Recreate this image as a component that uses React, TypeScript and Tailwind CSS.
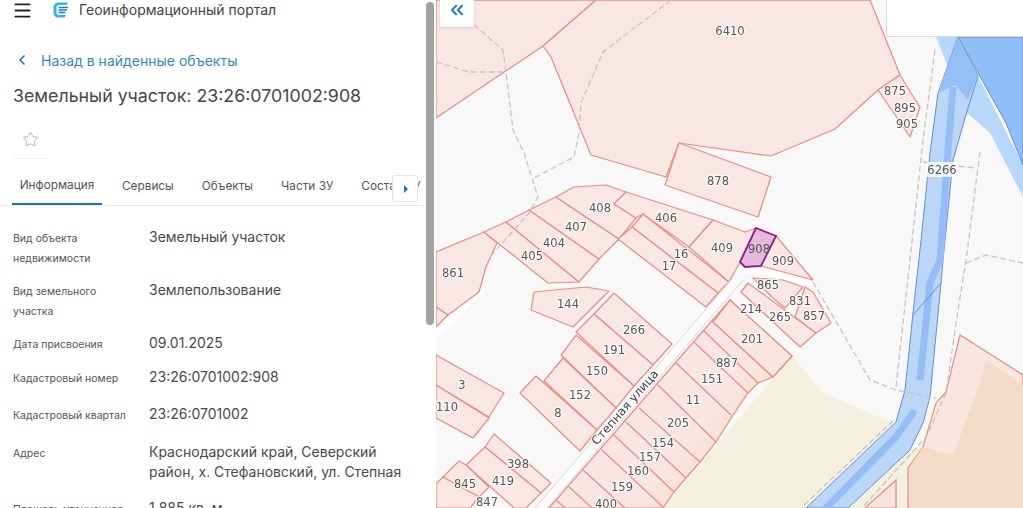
import { ChevronLeft, ChevronsLeft, Star, Menu } from "lucide-react";

const parcels: string[] = [
  "436,118 543,46 596,0 436,0",
  "596,0 543,46 551,57 591,155 666,177 679,143 771,156 835,129 878,90 900,75 886,40 870,0",
  "679,143 771,177 758,217 665,185",
  "436,252 484,232 497,243 486,267 479,292 448,315 436,307",
  "436,307 448,315 436,327",
  "484,232 506,222 579,282 548,283",
  "506,222 529,210 599,259 579,282",
  "529,210 556,197 619,239 599,259",
  "556,197 574,187 606,185 626,192 614,204 636,218 619,239",
  "626,192 713,220 689,247 643,214 636,218 614,204",
  "643,214 729,282 718,293 632,227",
  "632,227 718,293 706,307 618,239",
  "713,220 745,232 756,228 740,262 729,282 689,247",
  "776,236 813,280 761,266",
  "534,292 586,287 609,291 573,327 531,310",
  "614,293 672,344 653,365 594,314",
  "594,314 653,365 634,386 576,332",
  "576,335 634,386 616,408 561,355",
  "563,358 616,408 597,430 544,381",
  "536,376 597,430 580,451 520,393",
  "436,355 504,393 489,417 436,385",
  "436,385 489,418 473,438 436,418",
  "494,434 551,483 541,493 485,447",
  "485,447 541,493 526,508 514,508 466,465",
  "459,461 466,465 489,487 479,497 443,477",
  "443,477 479,497 470,508 436,508 436,484",
  "878,90 900,75 911,93 920,107 910,137",
  "741,292 748,283 816,333 800,347",
  "753,278 783,280 803,287 785,308 773,298",
  "805,287 813,292 831,323 816,333 795,317",
];

const frontLines: number[][] = [
  [713, 322, 773, 377],
  [703, 330, 758, 383],
  [694, 342, 748, 393],
  [676, 363, 731, 415],
  [658, 385, 716, 442],
  [639, 408, 700, 462],
  [626, 422, 686, 478],
  [614, 435, 674, 492],
  [602, 450, 663, 507],
  [583, 470, 625, 508],
  [569, 487, 592, 508],
  [556, 500, 565, 508],
];

const labels: [string, number, number][] = [
  ["6410", 730, 31], ["875", 895, 91], ["895", 905, 108], ["905", 907, 124],
  ["878", 718, 181], ["408", 600, 208], ["406", 666, 218], ["407", 576, 227], ["404", 554, 243],
  ["405", 532, 256], ["16", 681, 254], ["17", 669, 266], ["409", 722, 248], ["909", 783, 261],
  ["861", 453, 273], ["144", 568, 304], ["266", 634, 330], ["191", 614, 350], ["150", 597, 371],
  ["152", 580, 395], ["8", 558, 413], ["3", 462, 385], ["110", 447, 407], ["398", 518, 464],
  ["419", 503, 481], ["845", 465, 484], ["847", 487, 502], ["887", 727, 363], ["151", 712, 379],
  ["11", 693, 400], ["205", 678, 423], ["154", 663, 443], ["157", 650, 457], ["160", 638, 471],
  ["159", 622, 487], ["400", 606, 504], ["201", 752, 339], ["214", 751, 309], ["265", 780, 317],
  ["865", 768, 285], ["831", 800, 301], ["857", 814, 316],
];

const dashed: string[] = [
  "474,25 503,50 506,73 513,130 524,153 538,197 529,213 489,258",
  "436,62 469,72 503,72",
  "671,0 603,52 581,103 579,133 574,157 534,178",
  "935,50 923,140 910,260 896,387",
  "923,162 975,168",
  "980,152 966,260 956,323 946,393 926,437 863,507",
  "966,263 986,255 1023,263",
  "813,282 870,380 896,390 936,398",
  "804,505 894,420",
];

const LINE = "#e58f83";

function MapLayer() {
  return (
    <svg viewBox="436 0 587 508" className="block h-full w-full blur-[0.5px]">
      <defs>
        <linearGradient id="block" gradientUnits="userSpaceOnUse" x1="630" y1="400" x2="730" y2="480">
          <stop offset="0" stopColor="#f9e6e2" />
          <stop offset="0.55" stopColor="#f9e6e2" />
          <stop offset="1" stopColor="#f5dcb9" />
        </linearGradient>
      </defs>
      <rect x="436" y="0" width="587" height="508" fill="#f9f8f9" />
      <polygon points="792,356 823,393 893,423 806,508 663,508" fill="#f3f1de" />
      <polygon points="848,508 910,450 923,447 908,468 908,508" fill="#f3f1de" />
      <polyline points="436,335 482,290" fill="none" stroke="#ffffff" strokeWidth="6" />
      <polyline points="740,270 775,274 813,285" fill="none" stroke="#ffffff" strokeWidth="6" />
      {/* block along the street */}
      <polygon
        points="730,300 792,356 773,377 758,383 748,393 733,415 716,442 700,462 686,478 674,492 663,508 549,508"
        fill="url(#block)"
        stroke={LINE}
        strokeWidth="1.25"
      />
      {frontLines.map(([a, b, c, d]) => (
        <line key={`${a}-${b}`} x1={a} y1={b} x2={c} y2={d} stroke={LINE} strokeWidth="1.25" />
      ))}
      <polygon points="730,300 792,356 773,377 713,322" fill="#f9e6df" stroke={LINE} strokeWidth="1.25" />
      {parcels.map((p) => (
        <polygon key={p} points={p} fill="#f9e7e3" stroke={LINE} strokeWidth="1.25" strokeLinejoin="round" />
      ))}
      {/* street */}
      <polygon points="731,280 743,280 547,508 535,508" fill="#fcfcfc" />
      <line x1="743" y1="280" x2="547" y2="508" stroke="#d8d8d8" strokeWidth="1" />
      <line x1="731" y1="280" x2="535" y2="508" stroke="#d8d8d8" strokeWidth="1" />
      {/* right parcel */}
      <polygon points="960,335 1023,375 1023,508 908,508 908,468 923,447 936,403 946,392" fill="#f9e7df" stroke={LINE} strokeWidth="1.25" />
      <polygon points="986,360 1023,385 1023,508 909,508 909,468 923,447 953,455 980,383" fill="#f2dcc8" />
      <polygon points="896,480 865,508 896,508" fill="#f8e4dc" stroke={LINE} strokeWidth="1.25" />
      {/* water */}
      <polygon points="936,37 958,37 1023,165 1023,197 990,133 966,112" fill="#b7d8fb" />
      <polygon points="958,37 1023,37 1023,165 1006,123" fill="#90bff7" stroke="#5f8fd0" strokeWidth="1" />
      <polygon
        points="958,37 978,76 968,108 953,160 943,260 941,283 930,397 923,423 910,450 848,508 806,508 896,422 905,390 913,313 920,250 930,153 938,93"
        fill="#bcd6f8"
        stroke="#5f8fd0"
        strokeWidth="1"
      />
      <polygon points="958,37 978,76 968,100 955,85 938,93" fill="#93bff5" />
      <polyline points="953,87 948,150 940,260 930,283 920,380" fill="none" stroke="#94bdf5" strokeWidth="7" />
      <polyline points="913,413 896,437 826,508" fill="none" stroke="#94bdf5" strokeWidth="7" strokeLinecap="round" />
      <line x1="913" y1="315" x2="941" y2="283" stroke="#5f8fd0" strokeWidth="1" />
      {dashed.map((p) => (
        <polyline key={p} points={p} fill="none" stroke="#c5c3c3" strokeWidth="1.3" strokeDasharray="6 3" />
      ))}
      {/* selected parcel */}
      <polygon points="756,228 776,236 761,266 745,267 740,262" fill="#e4b9dc" stroke="#8e1a87" strokeWidth="1.8" />
      <g fontFamily="'DejaVu Sans', sans-serif" fontSize="11.5" fill="#555" textAnchor="middle">
        <text x="759" y="253">908</text>
        <rect x="927" y="162" width="30" height="15" fill="#ffffffd0" />
        <text x="942" y="174">6266</text>
        {labels.map(([t, x, y]) => (
          <text key={t} x={x} y={y + 4} stroke="#ffffffcc" strokeWidth="2.5" paintOrder="stroke">
            {t}
          </text>
        ))}
        <text
          transform="translate(628 410) rotate(-49)"
          fontSize="12"
          fill="#444"
          stroke="#ffffff"
          strokeWidth="2"
          paintOrder="stroke"
        >
          Степная улица
        </text>
      </g>
    </svg>
  );
}

function Logo() {
  return (
    <svg width="16" height="16" viewBox="0 0 16 16" className="shrink-0">
      <path d="M6 .5h9l-1.500 2.500H6C4.500 3 3.500 4.200 3.500 6v4.500C3.500 12 4.500 13 6 13h7l-1.500 2.500H5C2.500 15.500.5 13.500.5 11V5C.5 2.500 3 .5 6 .5z" fill="#38b3df" />
      <path d="M5.500 5.500h9.500M5.500 8h8.500M5.500 10.500h7" stroke="#1d7cc4" strokeWidth="1.500" />
    </svg>
  );
}

const rows: [string, string][] = [
  ["Вид объекта недвижимости", "Земельный участок"],
  ["Вид земельного участка", "Землепользование"],
  ["Дата присвоения", "09.01.2025"],
  ["Кадастровый номер", "23:26:0701002:908"],
  ["Кадастровый квартал", "23:26:0701002"],
  ["Адрес", "Краснодарский край, Северский район, х. Стефановский, ул. Степная"],
  ["Площадь уточненная", "1 885 кв. м"],
];

const rowPad = ["pb-[12px]", "pb-[12px]", "pb-[12px]", "pb-[16px]", "pb-[16px]", "pb-[16px]", "pb-0"];

function Panel() {
  return (
    <div className="flex h-[508px] w-[436px] shrink-0 bg-white font-['Inter',sans-serif]">
      <div className="min-w-0 flex-1 overflow-hidden">
        <header className="flex h-[20px] items-center pl-[12px] text-[#444]">
          <Menu size={21} strokeWidth={2.200} className="shrink-0 text-[#222]" />
          <span className="ml-[20px] flex"><Logo /></span>
          <span className="ml-[10px] text-[14px] leading-5 whitespace-nowrap">Геоинформационный портал</span>
        </header>
        <a className="mt-[30px] flex h-[20px] items-center pl-[14px] text-[14px] text-[#3c86b6]">
          <ChevronLeft size={16} strokeWidth={2.500} className="text-[#1f78b4]" />
          <span className="ml-[11px] whitespace-nowrap">Назад в найденные объекты</span>
        </a>
        <h1 className="mt-[14px] pl-[13px] text-[17.800px] leading-6 whitespace-nowrap text-[#484848]">
          Земельный участок: 23:26:0701002:908
        </h1>
        <div className="mt-[13px] ml-[13px] flex h-[38px] w-[34px] items-center justify-center border-b border-[#f0f0f0]">
          <Star size={17} strokeWidth={1.300} className="text-[#aaa]" />
        </div>
        <div className="relative mt-[9px] flex h-[38px] overflow-hidden border-b border-[#e9e9e9] pl-[12px] text-[11.800px] text-[#555]">
          <div className="flex h-[37px] w-[90px] shrink-0 items-center justify-center border-b-2 border-[#1a7ab0]">Информация</div>
          <div className="ml-[20px] flex items-center">Сервисы</div>
          <div className="ml-[28px] flex items-center">Объекты</div>
          <div className="ml-[28px] flex items-center whitespace-nowrap">Части ЗУ</div>
          <div className="ml-[28px] flex items-center whitespace-nowrap">Состав ЗУ</div>
          <div className="absolute top-[7px] left-[392px] flex h-[27px] w-[26px] items-center justify-center rounded-[3px] border border-[#e6e6e6] bg-white">
            <span className="ml-[1px] h-0 w-0 border-y-[4px] border-l-[4px] border-y-transparent border-l-[#1f78b4]" />
          </div>
        </div>
        <div className="pt-[21px] pr-[20px] pl-[13px]">
          {rows.map(([k, v], i) => (
            <div key={k} className={`grid grid-cols-[136px_1fr] ${rowPad[i]}`}>
              <div className="pt-[2px] pr-[16px] text-[10.500px] leading-[19.500px] text-[#555]">{k}</div>
              <div className="text-[14px] leading-[20px] text-[#4a4a4a]">{v}</div>
            </div>
          ))}
        </div>
      </div>
      <div className="w-[10px] shrink-0 pt-[2px]">
        <div className="h-[323px] w-[8px] rounded-[4px] bg-[#a2a2a2]" />
      </div>
    </div>
  );
}

export default function App() {
  return (
    <div className="flex h-[508px] w-[1023px] overflow-hidden bg-white">
      <Panel />
      <main className="relative min-w-0 flex-1">
        <MapLayer />
        <button className="absolute top-0 left-[4px] flex h-[27px] w-[34px] items-center justify-center bg-white pb-[7px] shadow-sm">
          <ChevronsLeft size={20} strokeWidth={2.500} className="text-[#1f80c4]" />
        </button>
        <div className="absolute top-0 right-0 h-[37px] w-[137px] rounded-bl-[3px] border-b border-l border-[#dcdcdc] bg-white" />
      </main>
    </div>
  );
}
